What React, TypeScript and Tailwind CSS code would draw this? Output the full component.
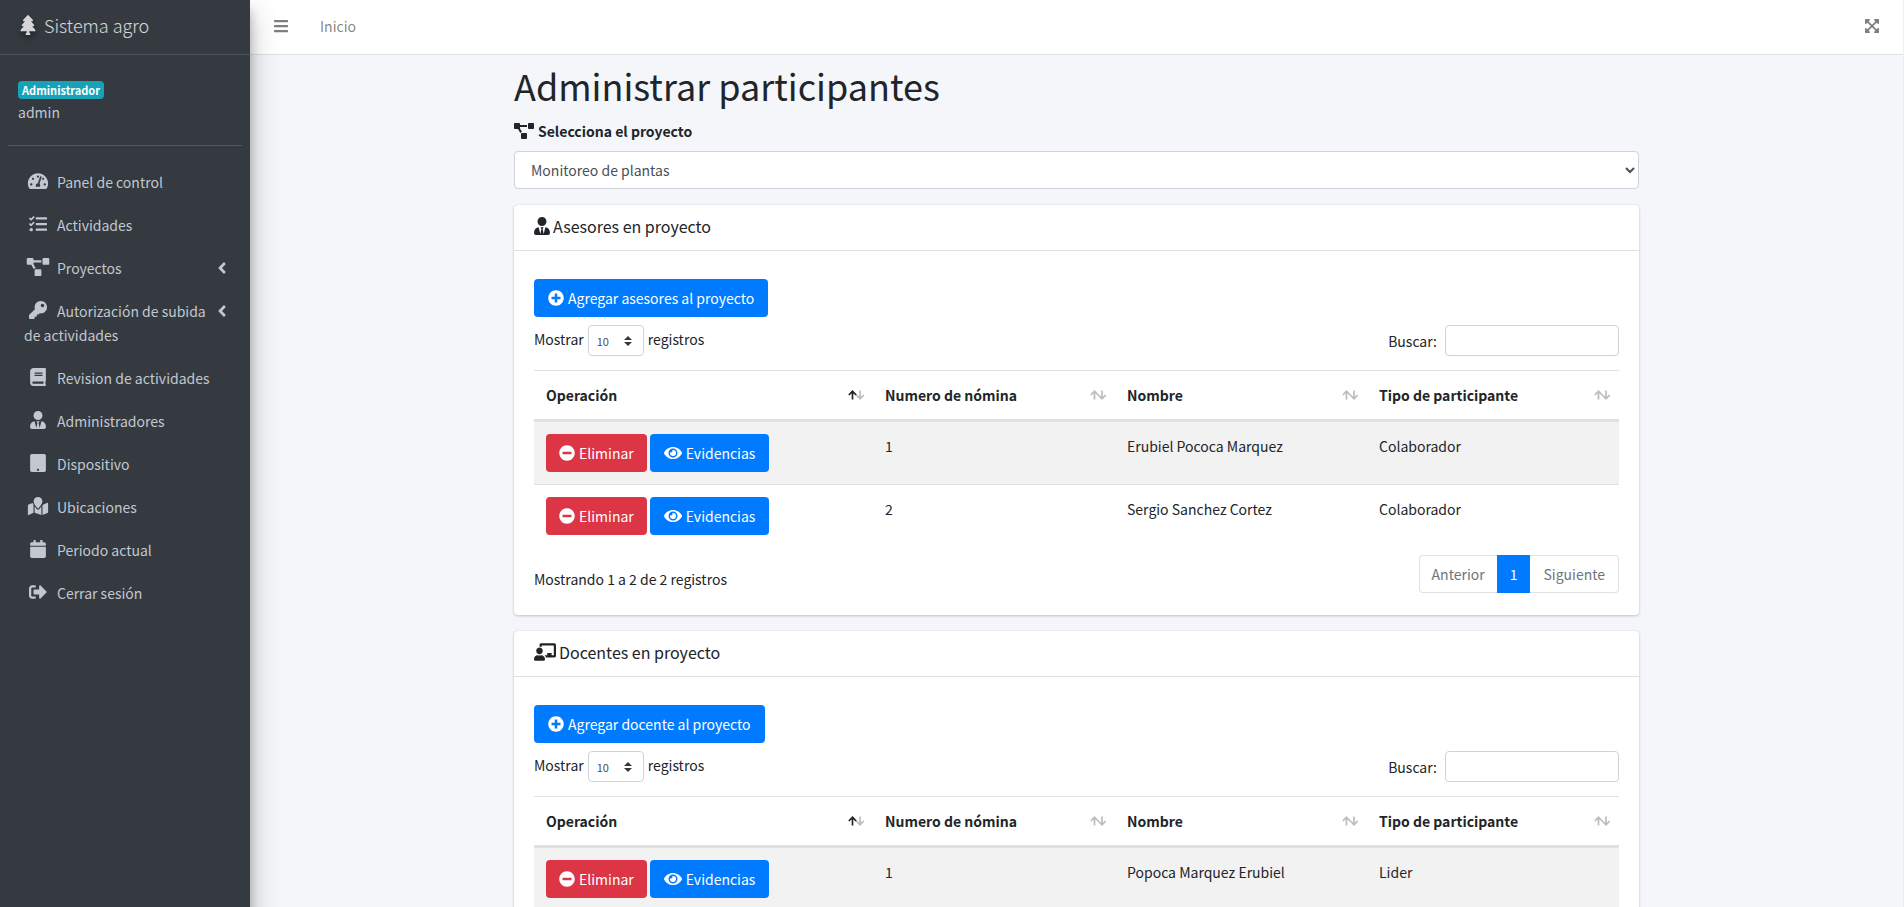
import { useState } from 'react'
import type { IconType } from 'react-icons'
import {
  FaAngleLeft,
  FaBars,
  FaBook,
  FaCalendar,
  FaChalkboardTeacher,
  FaExpandArrowsAlt,
  FaEye,
  FaKey,
  FaMapMarked,
  FaMinusCircle,
  FaPlusCircle,
  FaProjectDiagram,
  FaSignOutAlt,
  FaTablet,
  FaTachometerAlt,
  FaTasks,
  FaTree,
  FaUserTie,
} from 'react-icons/fa'

interface MenuItem {
  label: string
  icon: IconType
  tree?: boolean
}

interface Participante {
  numero: number
  nombre: string
  tipo: string
}

const MENU: MenuItem[] = [
  { label: 'Panel de control', icon: FaTachometerAlt },
  { label: 'Actividades', icon: FaTasks },
  { label: 'Proyectos', icon: FaProjectDiagram, tree: true },
  { label: 'Autorización de subida de actividades', icon: FaKey, tree: true },
  { label: 'Revision de actividades', icon: FaBook },
  { label: 'Administradores', icon: FaUserTie },
  { label: 'Dispositivo', icon: FaTablet },
  { label: 'Ubicaciones', icon: FaMapMarked },
  { label: 'Periodo actual', icon: FaCalendar },
  { label: 'Cerrar sesión', icon: FaSignOutAlt },
]

const COLUMNS = ['Operación', 'Numero de nómina', 'Nombre', 'Tipo de participante']

const ASESORES: Participante[] = [
  { numero: 1, nombre: 'Erubiel Pococa Marquez', tipo: 'Colaborador' },
  { numero: 2, nombre: 'Sergio Sanchez Cortez', tipo: 'Colaborador' },
]

const DOCENTES: Participante[] = [{ numero: 1, nombre: 'Popoca Marquez Erubiel', tipo: 'Lider' }]

export default function App() {
  const [proyecto, setProyecto] = useState('Monitoreo de plantas')

  return (
    <div className="flex min-h-screen border-r border-[#eceef1] bg-[#f4f6f9] font-['Noto_Sans_CJK_SC',sans-serif] text-sm leading-6 text-[#212529]">
      <Sidebar />

      <div className="flex-1 min-w-0">
        <header className="flex h-[55px] items-center justify-between border-b border-[#dee2e6] bg-white px-6 pb-0.5 text-black/50">
          <nav className="flex items-center gap-8">
            <button type="button" aria-label="Menú">
              <FaBars className="h-4 w-[14px]" />
            </button>
            <a href="#inicio">Inicio</a>
          </nav>
          <button type="button" aria-label="Pantalla completa">
            <FaExpandArrowsAlt className="h-4 w-[14px]" />
          </button>
        </header>

        <main className="mx-auto max-w-[1125px] pt-1.5">
          <h1 className="mb-2.5 text-4xl leading-12">Administrar participantes</h1>
          <label htmlFor="proyecto" className="mb-2 flex items-center gap-1 font-bold">
            <FaProjectDiagram className="h-4 w-5" />
            Selecciona el proyecto
          </label>
          <select
            id="proyecto"
            value={proyecto}
            onChange={(e) => setProyecto(e.target.value)}
            className="mb-4 block h-[38px] w-full rounded border border-[#ced4da] bg-white px-3 text-[#495057]"
          >
            <option>Monitoreo de plantas</option>
          </select>

          <ParticipantesCard
            id="asesores"
            icon={<FaUserTie className="h-[18px] w-4" />}
            title="Asesores en proyecto"
            addLabel="Agregar asesores al proyecto"
            rows={ASESORES}
          />
          <ParticipantesCard
            id="docentes"
            icon={<FaChalkboardTeacher className="h-[18px] w-[22px]" />}
            title="Docentes en proyecto"
            addLabel="Agregar docente al proyecto"
            rows={DOCENTES}
          />
        </main>
      </div>
    </div>
  )
}

function Sidebar() {
  return (
    <aside className="relative z-10 w-[250px] flex-shrink-0 bg-[#343a40] text-[#c2c7d0] shadow-[0_14px_28px_rgba(0,0,0,0.25),0_10px_10px_rgba(0,0,0,0.22)]">
      <a
        href="#inicio"
        className="flex h-[55px] items-center gap-1 border-b border-[#4b545c] pb-1 pl-4 text-lg font-light text-white/80"
      >
        <FaTree className="h-5 w-6 drop-shadow-[0_4px_3px_rgba(0,0,0,0.5)]" />
        Sistema agro
      </a>

      <div className="px-2">
        <div className="border-b border-[#4f5962] px-[10px] pt-[26px] pb-[21px]">
          <span className="block w-fit rounded bg-[#17a2b8] px-1 text-[11px] leading-[18px] font-bold text-white">
            Administrador
          </span>
          <a href="#admin" className="block pt-px">admin</a>
        </div>

        <nav className="pt-4">
          <ul className="space-y-[3px]">
            {MENU.map(({ label, icon: Icon, tree }) => (
              <li key={label}>
                <a href="#menu" className={`relative block py-2 pl-4 ${tree ? 'pr-8' : 'pr-4'}`}>
                  <Icon className="mr-[7px] ml-[2px] inline-block h-[18px] w-6 align-[-2px]" />
                  {label}
                  {tree && <FaAngleLeft className="absolute top-[11px] right-3 h-[18px] w-4" />}
                </a>
              </li>
            ))}
          </ul>
        </nav>
      </div>
    </aside>
  )
}

interface CardProps {
  id: string
  icon: React.ReactNode
  title: string
  addLabel: string
  rows: Participante[]
}

function ParticipantesCard({ id, icon, title, addLabel, rows }: CardProps) {
  const [search, setSearch] = useState('')
  const visible = rows.filter((r) => r.nombre.toLowerCase().includes(search.toLowerCase()))

  return (
    <section className="mb-4 rounded bg-white shadow-[0_0_1px_rgba(0,0,0,0.125),0_1px_3px_rgba(0,0,0,0.2)]">
      <h3 className="flex h-[46px] items-center gap-[3px] border-b border-black/12 px-5 pb-1 text-base">
        {icon}
        {title}
      </h3>

      <div className="px-5 pt-7 pb-[22px]">
        <button type="button" className="flex h-[38px] items-center gap-1 rounded bg-[#007bff] px-[14px] text-white">
          <FaPlusCircle className="h-4 w-4" />
          {addLabel}
        </button>

        <div className="mt-2 flex items-center justify-between">
          <label className="flex items-start gap-1 leading-7">
            Mostrar
            <span className="relative">
              <select className="block h-[31px] w-14 appearance-none rounded border border-[#ced4da] bg-white pl-2 text-[11px] text-[#495057]">
                <option>10</option>
                <option>25</option>
                <option>50</option>
              </select>
              <svg viewBox="0 0 4 5" className="pointer-events-none absolute top-[11px] right-3 h-[10px] w-2 fill-[#343a40]">
                <path d="M2 0L0 2h4zm0 5L0 3h4z" />
              </svg>
            </span>
            registros
          </label>
          <label className="flex items-center gap-2">
            Buscar:
            <input
              type="search"
              value={search}
              onChange={(e) => setSearch(e.target.value)}
              className="h-[31px] w-[174px] rounded border border-[#ced4da] bg-white px-2"
            />
          </label>
        </div>

        <table className="mt-[14px] w-full table-fixed border-collapse text-left">
          <colgroup>
            <col className="w-[339px]" />
            <col className="w-[242px]" />
            <col className="w-[252px]" />
            <col />
          </colgroup>
          <thead>
            <tr className="border-t border-b-3 border-t-[#dee2e6] border-b-[#dee2e6]">
              {COLUMNS.map((col, i) => (
                <th key={col} className="py-3 pr-[9px] pl-3 font-bold">
                  <div className="flex items-center justify-between">
                    {col}
                    <SortIcon active={i === 0} />
                  </div>
                </th>
              ))}
            </tr>
          </thead>
          <tbody>
            {visible.map((row) => (
              <tr key={row.numero} className="border-b border-[#dee2e6] align-top last:border-b-0 odd:bg-[#f2f2f2]">
                <td className="p-3">
                  <div className="flex gap-[3px]">
                    <button type="button" className="flex h-[38px] items-center gap-1 rounded bg-[#dc3545] px-[13px] text-white">
                      <FaMinusCircle className="h-4 w-4" />
                      Eliminar
                    </button>
                    <button type="button" className="flex h-[38px] items-center gap-1 rounded bg-[#007bff] px-[14px] text-white">
                      <FaEye className="h-4 w-[18px]" />
                      Evidencias
                    </button>
                  </div>
                </td>
                <td className="p-3">{row.numero}</td>
                <td className="p-3">{row.nombre}</td>
                <td className="p-3">{row.tipo}</td>
              </tr>
            ))}
          </tbody>
        </table>

        <div className="mt-2 flex items-start justify-between">
          <p className="pt-3">
            Mostrando 1 a {visible.length} de {rows.length} registros
          </p>
          <nav aria-label={`Páginas de ${id}`} className="flex h-[38px] text-[#6c757d]">
            <button type="button" className="rounded-l border border-r-0 border-[#dee2e6] px-3">Anterior</button>
            <button type="button" className="bg-[#007bff] px-[13px] text-white">1</button>
            <button type="button" className="rounded-r border border-l-0 border-[#dee2e6] px-[13px]">Siguiente</button>
          </nav>
        </div>
      </div>
    </section>
  )
}

function SortIcon({ active }: { active: boolean }) {
  return (
    <svg viewBox="0 0 16 10" className="h-[10px] w-4 fill-none stroke-[#212529]">
      <path d="M4.5 9.5V1.5M0.8 5l3.7-3.7L8.2 5" strokeWidth={1.7} opacity={active ? 1 : 0.3} />
      <path d="M12 0.5v8M8.3 5l3.7 3.7L15.7 5" strokeWidth={1.7} opacity={0.3} />
    </svg>
  )
}
